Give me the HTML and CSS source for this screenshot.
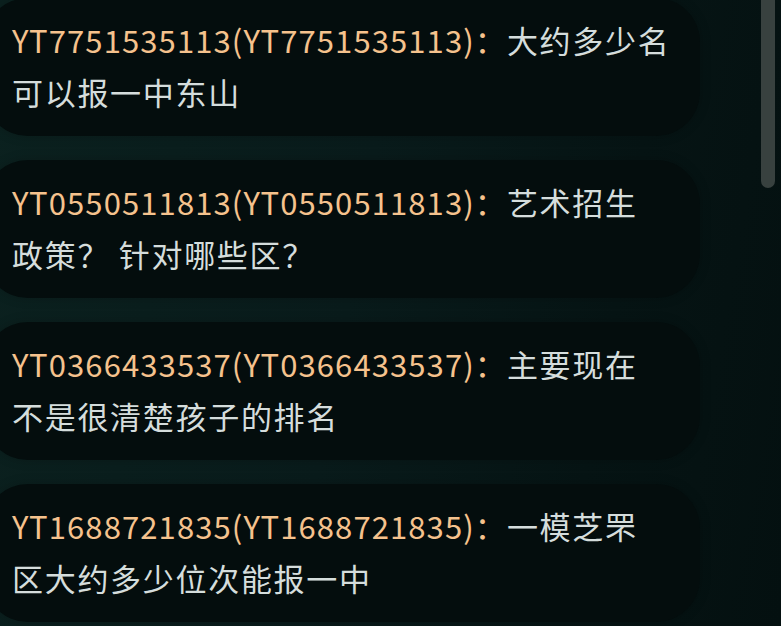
FILE: index.html
```html
<!DOCTYPE html>
<html>
<head>
    <title>评论</title>
    <link rel="stylesheet" href="styles.css">
</head>
<body>
    <div class="page">
        <!-- comment list -->
        <div class="comments">
            <div class="bubble">
                <span class="name">YT7751535113(YT7751535113)：</span>大约多少名<br>可以报一中东山
            </div>
            <div class="bubble">
                <span class="name">YT0550511813(YT0550511813)：</span>艺术招生<br>政策？ 针对哪些区？
            </div>
            <div class="bubble">
                <span class="name">YT0366433537(YT0366433537)：</span>主要现在<br>不是很清楚孩子的排名
            </div>
            <div class="bubble">
                <span class="name">YT1688721835(YT1688721835)：</span>一模芝罘<br>区大约多少位次能报一中
            </div>
        </div>

        <div class="scrollbar"></div>
    </div>
</body>
</html>
```

FILE: styles.css
```css
html, body {
    margin: 0;
    height: 100%;
    overflow: hidden;
}

body {
    font-family: "Noto Sans CJK SC", "Noto Sans", sans-serif;
    background: linear-gradient(100deg, #0b211f 0%, #091b1b 45%, #061414 75%, #041010 100%);
}

.page {
    position: relative;
    height: 100%;
}

.comments {
    display: flex;
    flex-direction: column;
    gap: 24px;
    margin-top: -2px;
    margin-left: -16px;
    width: 716px;
}

.bubble {
    background: #040d0d;
    border-radius: 44px;
    padding: 16px 28px 18px 28px;
    font-size: 31px;
    line-height: 52px;
    letter-spacing: 1.7px;
    color: #d5dddc;
    white-space: nowrap;
    box-shadow: 0 0 12px rgba(0, 0, 0, 0.2);
}

.name {
    color: #f5c28d;
    letter-spacing: 1.1px;
}

.scrollbar {
    position: absolute;
    top: 0;
    right: 6px;
    width: 14px;
    height: 190px;
    border-radius: 0 0 7px 7px;
    background: #38413f;
}
```
